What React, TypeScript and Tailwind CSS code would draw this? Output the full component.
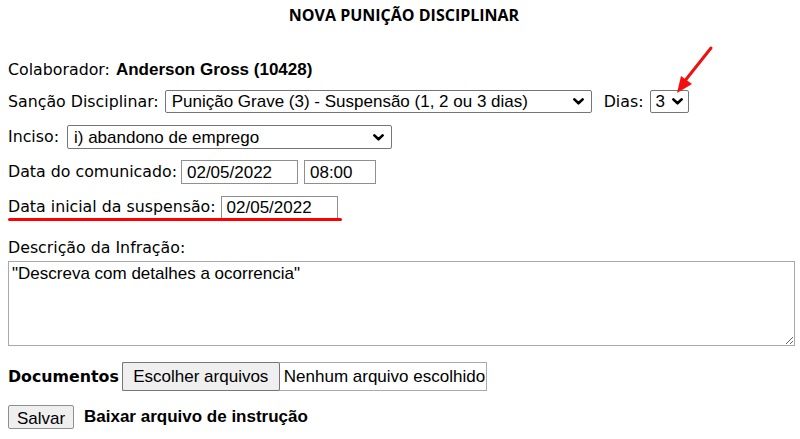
import React from "react";

const label = "font-['DejaVu_Sans',sans-serif] text-[15.8px] text-black";
const value = "font-['Liberation_Sans',Arial,sans-serif] text-[17px] text-black";

function Chevron() {
  return (
    <svg width="11" height="7" viewBox="0 0 11 7" aria-hidden>
      <path d="M1.4 1.4 L5.5 5.3 L9.6 1.4" fill="none" stroke="#000" strokeWidth="2.6" strokeLinecap="round" strokeLinejoin="round" />
    </svg>
  );
}

function FakeSelect({ text, className }: { text: string; className: string }) {
  return (
    <div className={`flex items-center justify-between rounded-[2px] border border-[#767676] bg-white pl-[6px] pr-[7px] ${value} ${className}`}>
      <span className="whitespace-nowrap leading-none">{text}</span>
      <Chevron />
    </div>
  );
}

function TextBox({ text, className }: { text: string; className: string }) {
  return (
    <div className={`flex items-center border border-[#8f8f8f] bg-white pl-[5px] ${value} ${className}`}>
      <span className="leading-none">{text}</span>
    </div>
  );
}

export default function App() {
  return (
    <div className="relative min-h-[439px] bg-white pl-2">
      <h1 className="flex h-[30px] items-center justify-center font-['Open_Sans',sans-serif] text-[16px] font-bold text-black">
        NOVA PUNIÇÃO DISCIPLINAR
      </h1>

      <div className="mt-[28px] flex h-[24px] items-center gap-[6px]">
        <span className={label}>Colaborador:</span>
        <span className={`${value} font-bold`}>Anderson Gross (10428)</span>
      </div>

      <div className="mt-[8px] flex h-[23px] items-center">
        <span className={label}>Sanção Disciplinar:</span>
        <FakeSelect text="Punição Grave (3) - Suspensão (1, 2 ou 3 dias)" className="ml-[6px] h-[23px] w-[427px]" />
        <span className={`${label} ml-[12px]`}>Dias:</span>
        <FakeSelect text="3" className="ml-[7px] h-[23px] w-[39px] !pl-[4px] !pr-[5px]" />
      </div>

      <div className="mt-[12px] flex h-[24px] items-center">
        <span className={label}>Inciso:</span>
        <FakeSelect text="i) abandono de emprego" className="ml-[8px] h-[24px] w-[325px]" />
      </div>

      <div className="mt-[11px] flex h-[24px] items-center">
        <span className={label}>Data do comunicado:</span>
        <TextBox text="02/05/2022" className="ml-[4px] h-[24px] w-[117px]" />
        <TextBox text="08:00" className="ml-[6px] h-[24px] w-[72px]" />
      </div>

      <div className="mt-[12px] w-[334px]">
        <div className="flex h-[22px] items-center">
          <span className={label}>Data inicial da suspensão:</span>
          <TextBox text="02/05/2022" className="ml-[5px] h-[22px] w-[117px] border-b-0" />
        </div>
        <div className="h-[3px] w-[334px] rounded-full bg-[#ff0000]" />
      </div>

      <div className="mt-[17px] flex h-[20px] items-center">
        <span className={label}>Descrição da Infração:</span>
      </div>

      <textarea
        className={`mt-[3px] block h-[85px] w-[787px] resize border border-[#a9a9a9] px-[3px] py-[2px] leading-[19px] outline-none ${value}`}
        defaultValue={'"Descreva com detalhes a ocorrencia"'}
      />

      <div className="mt-[16px] flex h-[29px] items-center">
        <span className={`${label} font-bold`}>Documentos</span>
        <div className="ml-[3px] flex h-[29px] items-center border border-[#a9a9a9] bg-white">
          <button className={`h-[29px] w-[158px] -my-px -ml-px rounded-[2px] border border-[#767676] bg-[#efefef] ${value}`}>
            Escolher arquivos
          </button>
          <span className={`${value} pl-[4px] pr-[1px]`}>Nenhum arquivo escolhido</span>
        </div>
      </div>

      <div className="mt-[14px] flex h-[24px] items-center">
        <button className={`h-[24px] w-[66px] rounded-[2px] border border-[#8f8f8f] bg-[#efefef] ${value}`}>
          Salvar
        </button>
        <span className={`${value} ml-[10px] font-bold`}>Baixar arquivo de instrução</span>
      </div>

      <svg className="absolute left-[670px] top-[44px]" width="48" height="54" viewBox="0 0 48 54" aria-hidden>
        <line x1="41" y1="4" x2="14" y2="38" stroke="#f01010" strokeWidth="3" strokeLinecap="round" />
        <polygon points="7,49 11,32 22,40" fill="#f01010" />
      </svg>
    </div>
  );
}
